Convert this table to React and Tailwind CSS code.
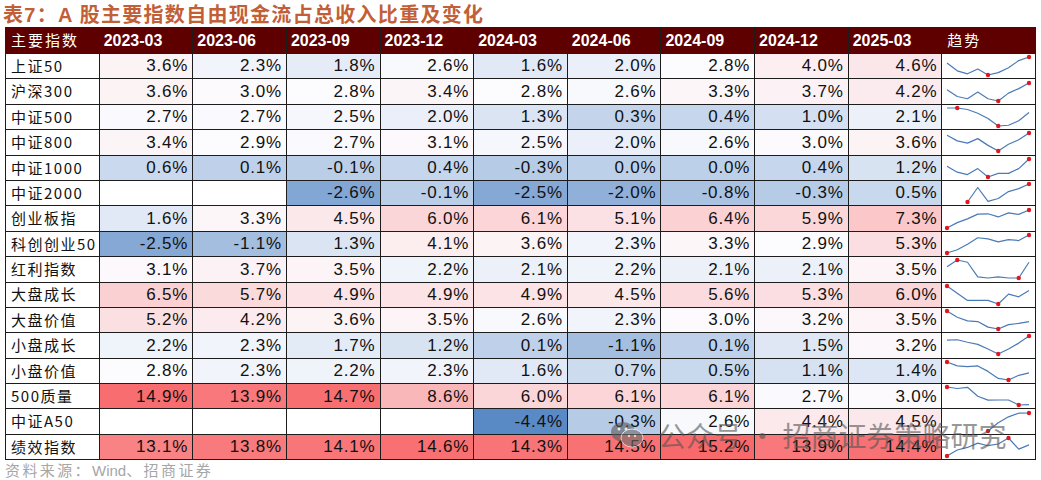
const cols = ["2023-03", "2023-06", "2023-09", "2023-12", "2024-03", "2024-06", "2024-09", "2024-12", "2025-03"];

const rows = [
  { name: "上证50", v: [3.6, 2.3, 1.8, 2.6, 1.6, 2.0, 2.8, 4.0, 4.6] },
  { name: "沪深300", v: [3.6, 3.0, 2.8, 3.4, 2.8, 2.6, 3.3, 3.7, 4.2] },
  { name: "中证500", v: [2.7, 2.7, 2.5, 2.0, 1.3, 0.3, 0.4, 1.0, 2.1] },
  { name: "中证800", v: [3.4, 2.9, 2.7, 3.1, 2.5, 2.0, 2.6, 3.0, 3.6] },
  { name: "中证1000", v: [0.6, 0.1, -0.1, 0.4, -0.3, 0.0, 0.0, 0.4, 1.2] },
  { name: "中证2000", v: [null, null, -2.6, -0.1, -2.5, -2.0, -0.8, -0.3, 0.5] },
  { name: "创业板指", v: [1.6, 3.3, 4.5, 6.0, 6.1, 5.1, 6.4, 5.9, 7.3] },
  { name: "科创创业50", v: [-2.5, -1.1, 1.3, 4.1, 3.6, 2.3, 3.3, 2.9, 5.3] },
  { name: "红利指数", v: [3.1, 3.7, 3.5, 2.2, 2.1, 2.2, 2.1, 2.1, 3.5] },
  { name: "大盘成长", v: [6.5, 5.7, 4.9, 4.9, 4.9, 4.5, 5.6, 5.3, 6.0] },
  { name: "大盘价值", v: [5.2, 4.2, 3.6, 3.5, 2.6, 2.3, 3.0, 3.2, 3.5] },
  { name: "小盘成长", v: [2.2, 2.3, 1.7, 1.2, 0.1, -1.1, 0.1, 1.5, 3.2] },
  { name: "小盘价值", v: [2.8, 2.3, 2.2, 2.3, 1.6, 0.7, 0.5, 1.1, 1.4] },
  { name: "500质量", v: [14.9, 13.9, 14.7, 8.6, 6.0, 6.1, 6.1, 2.7, 3.0] },
  { name: "中证A50", v: [null, null, null, null, -4.4, -0.3, 2.6, 4.4, 4.5] },
  { name: "绩效指数", v: [13.1, 13.8, 14.1, 14.6, 14.3, 14.5, 15.2, 13.9, 14.4] },
];

const BLUE = [90, 138, 198];
const MID = [252, 252, 255];
const RED = [248, 105, 107];

const mix = (a, b, t) => `rgb(${a.map((x, i) => Math.round(x + (b[i] - x) * t)).join(",")})`;

// one 3-colour scale over the whole table (min / median / max)
const all = rows.flatMap((r) => r.v).filter((x) => x != null).sort((a, b) => a - b);
const n = all.length;
const scale = {
  min: all[0],
  max: all[n - 1],
  mid: n % 2 ? all[(n - 1) / 2] : (all[n / 2 - 1] + all[n / 2]) / 2,
};

const cellColor = (x) => {
  if (x == null) return "#ffffff";
  if (x <= scale.mid) return mix(MID, BLUE, (scale.mid - x) / (scale.mid - scale.min));
  return mix(MID, RED, (x - scale.mid) / (scale.max - scale.mid));
};

const Spark = ({ v }) => {
  const pts = v.map((x, i) => (x == null ? null : { i, x })).filter(Boolean);
  const vals = pts.map((p) => p.x);
  const min = Math.min(...vals);
  const max = Math.max(...vals);
  const px = (i) => 5 + i * 10.25;
  const py = (x) => 21 - ((x - min) / (max - min || 1)) * 18;
  let hi = 0;
  let lo = 0;
  pts.forEach((p, k) => {
    if (p.x >= pts[hi].x) hi = k;
    if (p.x <= pts[lo].x) lo = k;
  });
  return (
    <svg width="92" height="24" viewBox="0 0 92 24" className="block">
      <polyline
        points={pts.map((p) => `${px(p.i)},${py(p.x)}`).join(" ")}
        fill="none"
        stroke="#4a7bb7"
        strokeWidth="1.2"
        strokeLinejoin="round"
      />
      {[hi, lo].map((k) => (
        <circle key={k} cx={px(pts[k].i)} cy={py(pts[k].x)} r="2.2" fill="#e3161e" />
      ))}
    </svg>
  );
};

const cjk = "font-['Noto_Sans_CJK_SC',sans-serif]";
const arial = "font-['Liberation_Sans',Arial,sans-serif]";

export default function App() {
  return (
    <div className="relative w-[1041px] h-[480px] bg-white overflow-hidden">
      <div className={`h-[27px] pl-[3px] text-[20px] leading-[27px] font-bold tracking-[1.3px] text-[#c25f36] ${cjk}`}>
        表<span className={arial}>7</span>：<span className={arial}>A</span> 股主要指数自由现金流占总收入比重及变化
      </div>

      <div className="ml-[5px] w-[1031px] grid grid-cols-[repeat(11,minmax(0,1fr))] grid-rows-[25px_repeat(16,24.4px)] gap-px p-px bg-[#1c1c1c]">
        <div className={`bg-[#5e0000] text-white text-[15px] tracking-[2px] pl-[5px] flex items-center ${cjk}`}>主要指数</div>
        {cols.map((c) => (
          <div key={c} className={`bg-[#5e0000] text-white text-[16px] font-bold pl-[4px] flex items-center ${arial}`}>
            {c}
          </div>
        ))}
        <div className={`bg-[#5e0000] text-white text-[15px] tracking-[2px] pl-[5px] flex items-center ${cjk}`}>趋势</div>

        {rows.map((r) => (
          <div key={r.name} className="contents">
            <div className={`bg-white text-[#111] text-[15px] tracking-[1.5px] pl-[5px] flex items-center ${cjk}`}>{r.name}</div>
            {r.v.map((x, j) => (
              <div
                key={j}
                className={`flex items-center justify-end pr-[4px] text-[17px] tracking-[0.8px] text-[#111] ${arial}`}
                style={{ backgroundColor: cellColor(x) }}
              >
                {x == null ? "" : `${x.toFixed(1)}%`}
              </div>
            ))}
            <div className="bg-white flex items-center overflow-hidden">
              <Spark v={r.v} />
            </div>
          </div>
        ))}
      </div>

      <div className={`pl-[5px] pt-[1px] h-[20px] leading-[18px] text-[15px] tracking-[2.4px] text-[#a6a6a6] ${cjk}`}>
        资料来源：<span className={`${arial} text-[15px] tracking-normal`}>Wind</span>、招商证券
      </div>

      <div className="absolute left-[610px] top-[419px] flex items-center gap-[14px] pointer-events-none opacity-60">
        <svg width="34" height="30" viewBox="0 0 34 30">
          <ellipse cx="13" cy="12" rx="12" ry="10" fill="#5a5a5a" />
          <ellipse cx="22" cy="18" rx="11" ry="9" fill="#6e6e6e" stroke="#ffffff" strokeWidth="1" />
          <circle cx="9" cy="9" r="1.5" fill="#ffffff" />
          <circle cx="16" cy="9" r="1.5" fill="#ffffff" />
          <circle cx="19" cy="16" r="1.2" fill="#ffffff" />
          <circle cx="25" cy="16" r="1.2" fill="#ffffff" />
        </svg>
        <div className={`text-[28px] leading-[32px] text-[#555] ${cjk}`}>公众号 · 招商证券策略研究</div>
      </div>
    </div>
  );
}
